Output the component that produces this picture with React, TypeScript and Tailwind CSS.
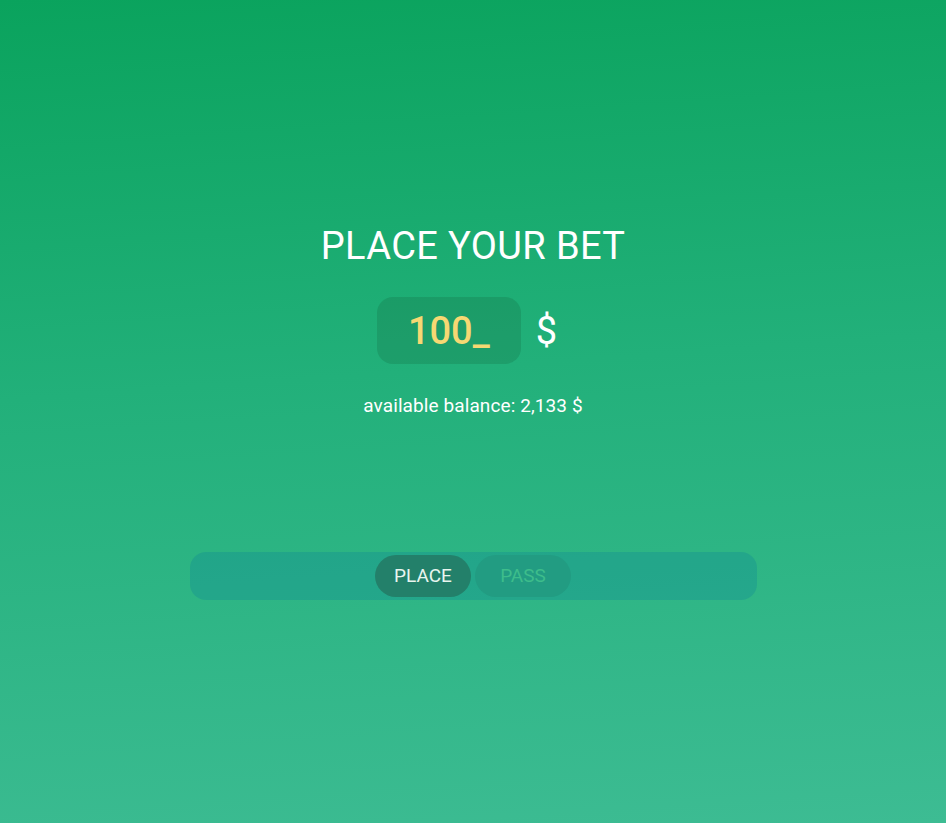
import React from "react";

export default function App() {
  return (
    <div
      className="w-[946px] h-[823px] flex flex-col items-center bg-[linear-gradient(176deg,#0aa35d_0%,#22b07a_45%,#3dbc93_100%)] text-white"
      style={{ fontFamily: "Roboto, 'Liberation Sans', sans-serif" }}
    >
      <h1 className="mt-[227px] text-[38px] leading-[38px] font-normal tracking-[0.01em]">PLACE YOUR BET</h1>
      <div className="mt-[32px] flex items-center pr-[12px]">
        <div className="w-[144px] h-[67px] rounded-[16px] bg-[rgba(20,105,65,0.25)] flex items-center justify-center text-[38px] leading-none font-medium text-[#f6d873]">
          100_
        </div>
        <div className="ml-[15px] text-[38px] leading-none">$</div>
      </div>
      <p className="mt-[30px] text-[19px] leading-[24px] tracking-[0.005em]">available balance: 2,133 $</p>
      <div className="mt-[134px] w-[567px] h-[48px] rounded-[16px] bg-[rgba(0,115,160,0.22)] flex items-center justify-center gap-[4px]">
        <button className="w-[96px] h-[42px] rounded-[21px] bg-[#23806a] text-[19px] text-[#e8f5ef]">PLACE</button>
        <button className="w-[96px] h-[42px] rounded-[21px] bg-[#229c82] text-[19px] text-[#3dbd8b]">PASS</button>
      </div>
    </div>
  );
}
